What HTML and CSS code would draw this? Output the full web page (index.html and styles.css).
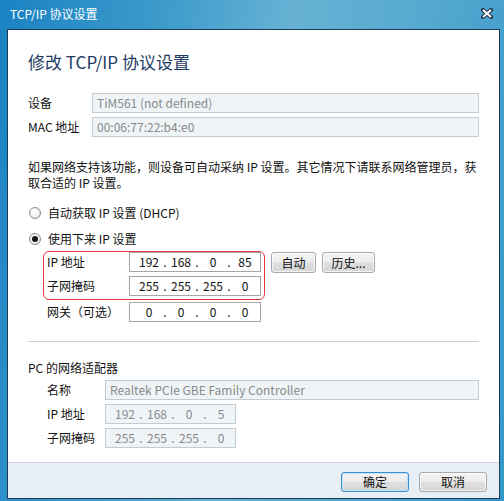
FILE: index.html
```html
<!DOCTYPE html>
<html lang="zh-CN">
<head>
<meta charset="utf-8">
<title>TCP/IP 协议设置</title>
<link rel="stylesheet" href="styles.css">
</head>
<body>
<div class="window">
  <div class="titlebar">
    <span class="title">TCP/IP 协议设置</span>
    <svg class="close" width="12" height="11" viewBox="0 0 12 11">
      <path d="M2 2 L10 9 M10 2 L2 9" stroke="#24384c" stroke-width="4" stroke-linecap="square"/>
      <path d="M2 2 L10 9 M10 2 L2 9" stroke="#ffffff" stroke-width="2"/>
    </svg>
  </div>
  <div class="client">
    <div class="content">
      <h1 class="heading">修改 TCP/IP 协议设置</h1>

      <div class="device">
        <div class="row">
          <span class="label wide">设备</span>
          <div class="field disabled grow">TiM561 (not defined)</div>
        </div>
        <div class="row">
          <span class="label wide">MAC 地址</span>
          <div class="field disabled grow">00:06:77:22:b4:e0</div>
        </div>
      </div>

      <p class="info">如果网络支持该功能，则设备可自动采纳 IP 设置。其它情况下请联系网络管理员，获<br>取合适的 IP 设置。</p>

      <div class="radio-row first">
        <span class="radio"></span>
        <span>自动获取 IP 设置 (DHCP)</span>
      </div>
      <div class="radio-row second">
        <span class="radio checked"></span>
        <span>使用下来 IP 设置</span>
      </div>

      <div class="ip-block">
        <div class="ip-box">
          <div class="row">
            <span class="label ipl">IP 地址</span>
            <div class="field edit ip"><span class="oct">192</span><span class="dot">.</span><span class="oct">168</span><span class="dot">.</span><span class="oct">0</span><span class="dot">.</span><span class="oct">85</span></div>
          </div>
          <div class="row">
            <span class="label ipl">子网掩码</span>
            <div class="field edit ip"><span class="oct">255</span><span class="dot">.</span><span class="oct">255</span><span class="dot">.</span><span class="oct">255</span><span class="dot">.</span><span class="oct">0</span></div>
          </div>
        </div>
        <div class="side-buttons">
          <button class="btn auto">自动</button>
          <button class="btn hist">历史...</button>
        </div>
      </div>
      <div class="row gateway">
        <span class="label ipl">网关（可选）</span>
        <div class="field edit ip"><span class="oct">0</span><span class="dot">.</span><span class="oct">0</span><span class="dot">.</span><span class="oct">0</span><span class="dot">.</span><span class="oct">0</span></div>
      </div>

      <div class="separator"></div>

      <div class="section-title">PC 的网络适配器</div>
      <div class="adapter">
        <div class="row">
          <span class="label pcl">名称</span>
          <div class="field disabled grow">Realtek PCIe GBE Family Controller</div>
        </div>
        <div class="row">
          <span class="label pcl">IP 地址</span>
          <div class="field disabled ip small"><span class="oct">192</span><span class="dot">.</span><span class="oct">168</span><span class="dot">.</span><span class="oct">0</span><span class="dot">.</span><span class="oct">5</span></div>
        </div>
        <div class="row">
          <span class="label pcl">子网掩码</span>
          <div class="field disabled ip small"><span class="oct">255</span><span class="dot">.</span><span class="oct">255</span><span class="dot">.</span><span class="oct">255</span><span class="dot">.</span><span class="oct">0</span></div>
        </div>
      </div>
    </div>
    <div class="footer">
      <button class="btn dlg default">确定</button>
      <button class="btn dlg">取消</button>
    </div>
  </div>
</div>
</body>
</html>
```

FILE: styles.css
```css
* {
  box-sizing: border-box;
  margin: 0;
  padding: 0;
}

html, body {
  width: 504px;
  height: 501px;
  overflow: hidden;
}

body {
  font-family: "Noto Sans CJK SC", "Noto Sans", sans-serif;
  font-size: 12px;
  color: #111;
}

.window {
  width: 504px;
  height: 501px;
  display: flex;
  flex-direction: column;
  padding: 0 4px 2px 7px;
  background: linear-gradient(100deg, #1a82c3 0%, #3d9bcb 28%, #67b2d4 50%, #56a9cf 72%, #3598c9 100%);
}

.titlebar {
  height: 29px;
  flex: none;
  display: flex;
  align-items: center;
  justify-content: space-between;
  padding: 0 7px 2px 3px;
}

.title {
  color: #fff;
  font-size: 12px;
  line-height: 16px;
}

.close {
  display: block;
}

.client {
  flex: 1;
  display: flex;
  flex-direction: column;
  background: #fff;
  border: 1px solid #1b3b58;
}

.content {
  flex: 1;
  padding: 20px 20px 0 20px;
}

.heading {
  font-size: 17px;
  font-weight: normal;
  line-height: 24px;
  color: #1d3c63;
}

.device {
  margin-top: 19px;
  display: flex;
  flex-direction: column;
  gap: 4px;
}

.row {
  display: flex;
  align-items: center;
  height: 20px;
}

.label {
  flex: none;
  line-height: 16px;
}

.label.wide { width: 64px; }
.label.ipl { width: 82px; }
.label.pcl { width: 58px; }

.field {
  height: 20px;
  line-height: 18px;
  border: 1px solid #c3cad1;
  white-space: nowrap;
  overflow: hidden;
}

.field.grow { flex: 1; }

.field.disabled {
  background: #eff4f7;
  color: #8a8a8a;
  padding-left: 4px;
}

.field.edit {
  background: #fff;
  border-color: #a5a5a5;
  color: #111;
}

.ip {
  display: flex;
  width: 132px;
  padding-left: 6px;
}

.ip.small {
  width: 131px;
  padding-left: 6px;
}

.oct {
  width: 26px;
  text-align: center;
}

.dot {
  width: 6px;
  text-align: center;
}

.info {
  margin-top: 22px;
  line-height: 16px;
  white-space: nowrap;
}

.radio-row {
  display: flex;
  align-items: center;
  gap: 7px;
  height: 16px;
  line-height: 16px;
  padding-left: 1px;
}

.radio-row.first { margin-top: 14px; }
.radio-row.second { margin-top: 10px; }

.radio {
  width: 12px;
  height: 12px;
  border-radius: 50%;
  border: 1px solid #8c8c8c;
  background: radial-gradient(circle at 40% 40%, #ffffff 0%, #f0f0f0 55%, #d8d8d8 100%);
  display: flex;
  align-items: center;
  justify-content: center;
}

.radio.checked::after {
  content: "";
  width: 6px;
  height: 6px;
  border-radius: 50%;
  background: #151515;
}

.ip-block {
  margin-top: 4px;
  margin-left: 15px;
  display: flex;
  align-items: flex-start;
}

.ip-box {
  width: 222px;
  border: 1px solid #e0383d;
  border-radius: 6px;
  padding: 0 3px 3px 3px;
  display: flex;
  flex-direction: column;
  gap: 4px;
}

.side-buttons {
  display: flex;
  gap: 6px;
  margin-left: 6px;
  margin-top: 1px;
}

.btn {
  font-family: inherit;
  font-size: 12px;
  color: #111;
  height: 21px;
  line-height: 17px;
  border: 1px solid #a9a9a9;
  border-radius: 3px;
  background: linear-gradient(#f5f5f5 0%, #ececec 48%, #dfdfdf 52%, #d6d6d6 100%);
  box-shadow: inset 0 0 0 1px rgba(255, 255, 255, 0.7);
}

.btn.auto { width: 45px; }
.btn.hist { width: 53px; }

.gateway {
  margin-top: 2px;
  margin-left: 19px;
}

.separator {
  margin-top: 19px;
  height: 1px;
  background: #cfcfcf;
}

.section-title {
  margin-top: 18px;
  line-height: 16px;
}

.adapter {
  margin-top: 4px;
  margin-left: 19px;
  display: flex;
  flex-direction: column;
  gap: 4px;
}

.footer {
  flex: none;
  height: 36px;
  border-top: 1px solid #cbd4dc;
  background: #e7eef5;
  display: flex;
  justify-content: flex-end;
  align-items: flex-start;
  gap: 10px;
  padding: 9px 12px 0 0;
}

.btn.dlg {
  width: 68px;
  height: 20px;
  line-height: 16px;
}

.btn.default {
  border-color: #3c8fd3;
  box-shadow: inset 0 0 0 1px #bfe3f8;
}
```
